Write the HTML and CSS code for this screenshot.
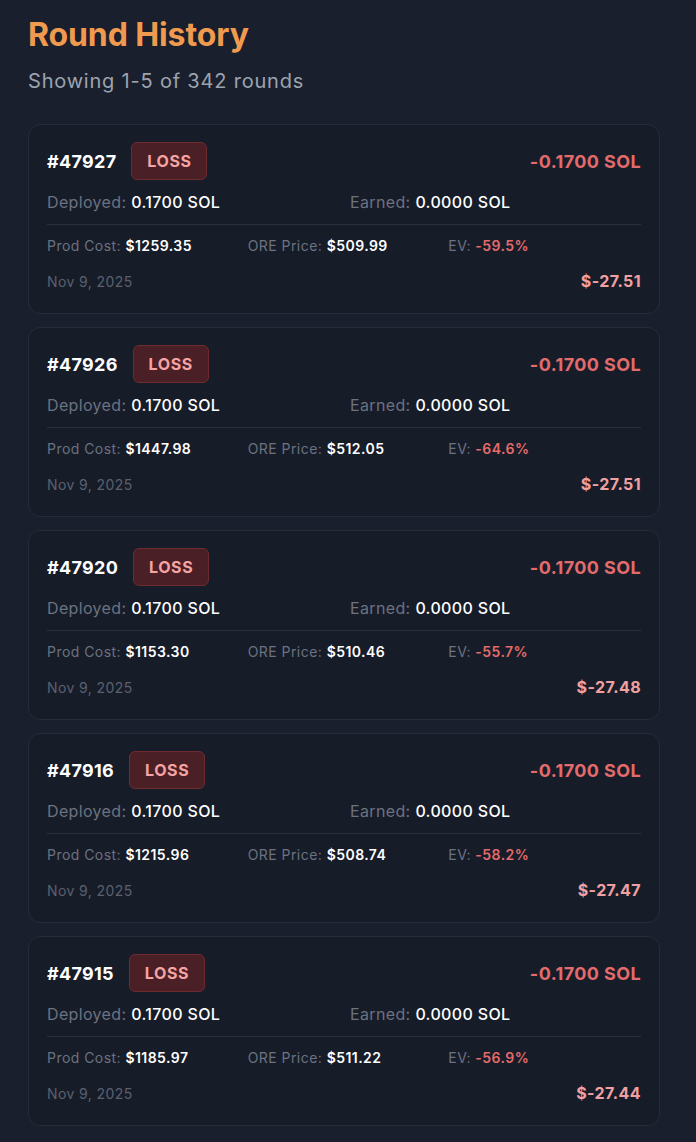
FILE: index.html
```html
<!DOCTYPE html>
<html>
<head>
<meta charset="utf-8">
<link rel="stylesheet" href="styles.css">
</head>
<body>
<main class="page">
  <header class="head">
    <h1 class="title">Round History</h1>
    <p class="sub">Showing 1-5 of 342 rounds</p>
  </header>
  <section class="list">
    <article class="card">
      <div class="top">
        <div class="id-wrap"><span class="id">#47927</span><span class="badge">LOSS</span></div>
        <span class="net">-0.1700 SOL</span>
      </div>
      <div class="row2">
        <div><span class="lbl">Deployed:</span> <span class="val">0.1700 SOL</span></div>
        <div><span class="lbl">Earned:</span> <span class="val">0.0000 SOL</span></div>
      </div>
      <div class="row3">
        <div><span class="lbl">Prod Cost:</span> <span class="val">$1259.35</span></div>
        <div><span class="lbl">ORE Price:</span> <span class="val">$509.99</span></div>
        <div><span class="lbl">EV:</span> <span class="neg">-59.5%</span></div>
      </div>
      <div class="row4"><span class="date">Nov 9, 2025</span><span class="usd">$-27.51</span></div>
    </article>
    <article class="card">
      <div class="top">
        <div class="id-wrap"><span class="id">#47926</span><span class="badge">LOSS</span></div>
        <span class="net">-0.1700 SOL</span>
      </div>
      <div class="row2">
        <div><span class="lbl">Deployed:</span> <span class="val">0.1700 SOL</span></div>
        <div><span class="lbl">Earned:</span> <span class="val">0.0000 SOL</span></div>
      </div>
      <div class="row3">
        <div><span class="lbl">Prod Cost:</span> <span class="val">$1447.98</span></div>
        <div><span class="lbl">ORE Price:</span> <span class="val">$512.05</span></div>
        <div><span class="lbl">EV:</span> <span class="neg">-64.6%</span></div>
      </div>
      <div class="row4"><span class="date">Nov 9, 2025</span><span class="usd">$-27.51</span></div>
    </article>
    <article class="card">
      <div class="top">
        <div class="id-wrap"><span class="id">#47920</span><span class="badge">LOSS</span></div>
        <span class="net">-0.1700 SOL</span>
      </div>
      <div class="row2">
        <div><span class="lbl">Deployed:</span> <span class="val">0.1700 SOL</span></div>
        <div><span class="lbl">Earned:</span> <span class="val">0.0000 SOL</span></div>
      </div>
      <div class="row3">
        <div><span class="lbl">Prod Cost:</span> <span class="val">$1153.30</span></div>
        <div><span class="lbl">ORE Price:</span> <span class="val">$510.46</span></div>
        <div><span class="lbl">EV:</span> <span class="neg">-55.7%</span></div>
      </div>
      <div class="row4"><span class="date">Nov 9, 2025</span><span class="usd">$-27.48</span></div>
    </article>
    <article class="card">
      <div class="top">
        <div class="id-wrap"><span class="id">#47916</span><span class="badge">LOSS</span></div>
        <span class="net">-0.1700 SOL</span>
      </div>
      <div class="row2">
        <div><span class="lbl">Deployed:</span> <span class="val">0.1700 SOL</span></div>
        <div><span class="lbl">Earned:</span> <span class="val">0.0000 SOL</span></div>
      </div>
      <div class="row3">
        <div><span class="lbl">Prod Cost:</span> <span class="val">$1215.96</span></div>
        <div><span class="lbl">ORE Price:</span> <span class="val">$508.74</span></div>
        <div><span class="lbl">EV:</span> <span class="neg">-58.2%</span></div>
      </div>
      <div class="row4"><span class="date">Nov 9, 2025</span><span class="usd">$-27.47</span></div>
    </article>
    <article class="card">
      <div class="top">
        <div class="id-wrap"><span class="id">#47915</span><span class="badge">LOSS</span></div>
        <span class="net">-0.1700 SOL</span>
      </div>
      <div class="row2">
        <div><span class="lbl">Deployed:</span> <span class="val">0.1700 SOL</span></div>
        <div><span class="lbl">Earned:</span> <span class="val">0.0000 SOL</span></div>
      </div>
      <div class="row3">
        <div><span class="lbl">Prod Cost:</span> <span class="val">$1185.97</span></div>
        <div><span class="lbl">ORE Price:</span> <span class="val">$511.22</span></div>
        <div><span class="lbl">EV:</span> <span class="neg">-56.9%</span></div>
      </div>
      <div class="row4"><span class="date">Nov 9, 2025</span><span class="usd">$-27.44</span></div>
    </article>
  </section>
</main>
</body>
</html>
```

FILE: styles.css
```css
* { box-sizing: border-box; }
html, body { margin: 0; padding: 0; }
body {
  background: #1a1f2d;
  font-family: Inter, "Noto Sans", "Liberation Sans", sans-serif;
  color: #ffffff;
  min-height: 1142px;
}
.page { padding: 17px 36px 0 28px; }
.head { margin-bottom: 29px; }
.title {
  margin: 0;
  font-size: 32px;
  line-height: 36px;
  font-weight: 700;
  color: #f09a4f;
  letter-spacing: -0.1px;
}
.sub {
  margin: 14px 0 0 0;
  font-size: 20px;
  line-height: 28px;
  color: #9ca3af;
  letter-spacing: 0.8px;
}
.list { display: flex; flex-direction: column; gap: 13px; }
.card {
  background: #171c29;
  border: 1px solid #262c3a;
  border-radius: 12px;
  padding: 17px 18px 21px 18px;
  height: 190px;
}
.top { display: flex; align-items: center; justify-content: space-between; height: 38px; }
.id-wrap { display: flex; align-items: center; gap: 15px; }
.id { font-size: 18px; font-weight: 700; color: #ffffff; letter-spacing: 0.3px; }
.badge {
  display: inline-flex; align-items: center; justify-content: center;
  width: 76px; height: 38px;
  border-radius: 6px;
  background: #4a1f25;
  border: 1px solid #6e2b30;
  color: #f5a3a3;
  font-size: 16px; font-weight: 700; letter-spacing: 0.6px;
}
.net { font-size: 18px; font-weight: 700; color: #e36b6b; letter-spacing: 0.4px; }
.row2 {
  display: grid; grid-template-columns: 1fr 1fr; column-gap: 12px;
  margin-top: 10px;
  padding-bottom: 10px;
  border-bottom: 1px solid #2a303e;
  font-size: 16px; line-height: 24px;
  letter-spacing: 0.35px;
}
.lbl { color: #6b7280; }
.val { color: #ffffff; font-weight: 500; }
.row3 {
  display: grid; grid-template-columns: 1fr 1fr 1fr; column-gap: 8px;
  padding-top: 11px;
  font-size: 14px; line-height: 20px;
  letter-spacing: 0.45px;
}
.row3 .val { font-weight: 600; }
.neg { color: #e36b6b; font-weight: 600; }
.row4 {
  display: flex; justify-content: space-between; align-items: center;
  margin-top: 13px; height: 24px;
}
.date { font-size: 14px; color: #5a616e; letter-spacing: 0.4px; }
.usd { font-size: 16px; font-weight: 700; color: #f0a0a0; letter-spacing: 0.4px; }
```
